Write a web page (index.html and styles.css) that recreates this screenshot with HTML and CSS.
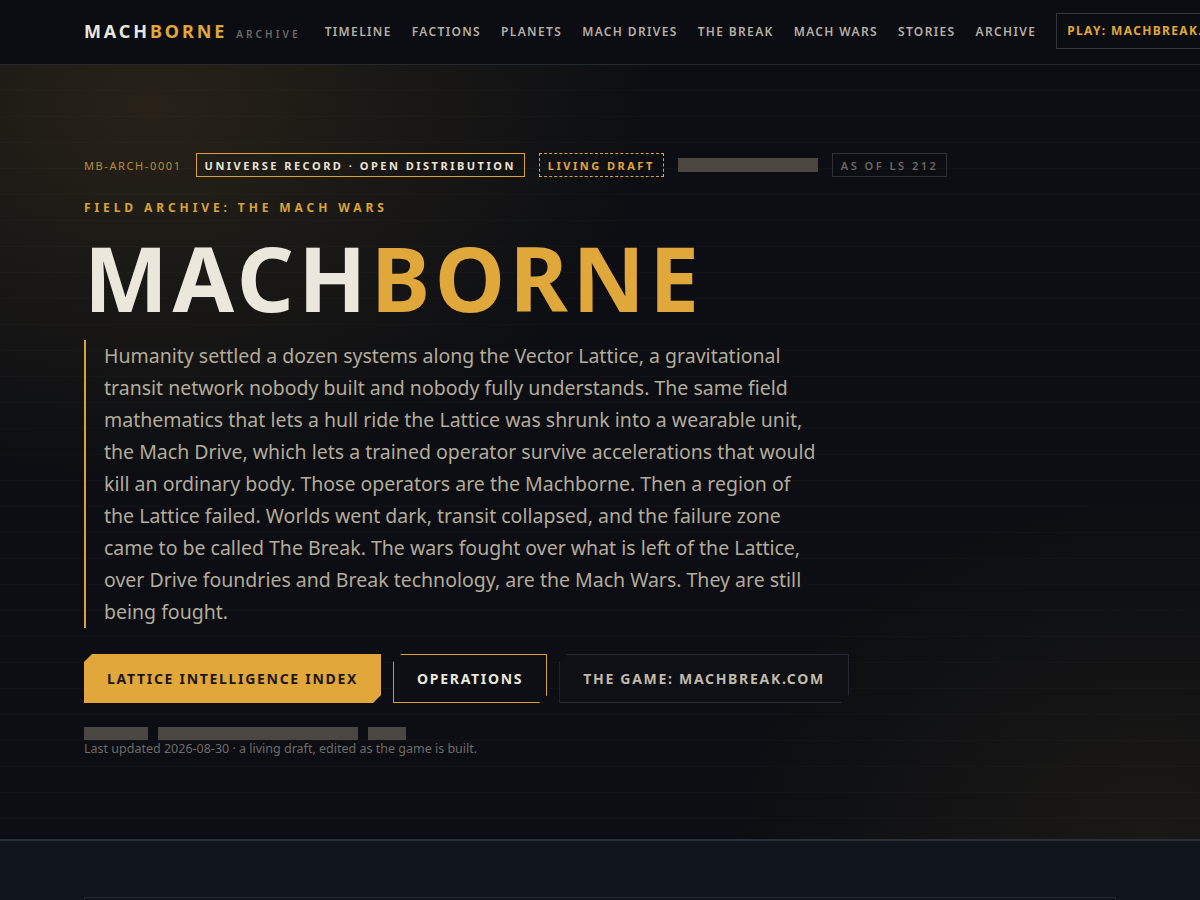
FILE: index.html
```html
<!DOCTYPE html>
<html lang="en">
<head>
<meta charset="utf-8">
<title>Machborne Archive</title>
<link rel="stylesheet" href="styles.css">
</head>
<body>
<header class="topbar">
  <div class="topbar-inner">
    <a class="brand" href="#"><span class="brand-a">MACH</span><span class="brand-b">BORNE</span><span class="brand-sub">ARCHIVE</span></a>
    <nav class="nav">
      <a href="#">TIMELINE</a>
      <a href="#">FACTIONS</a>
      <a href="#">PLANETS</a>
      <a href="#">MACH DRIVES</a>
      <a href="#">THE BREAK</a>
      <a href="#">MACH WARS</a>
      <a href="#">STORIES</a>
      <a href="#">ARCHIVE</a>
      <a class="play" href="#">PLAY: MACHBREAK.COM</a>
    </nav>
  </div>
</header>

<section class="hero">
  <div class="hero-inner">
    <div class="meta">
      <span class="code">MB-ARCH-0001</span>
      <span class="tag tag-solid">UNIVERSE RECORD · OPEN DISTRIBUTION</span>
      <span class="tag tag-dashed">LIVING DRAFT</span>
      <span class="redact redact-meta"></span>
      <span class="tag tag-muted">AS OF LS 212</span>
    </div>
    <p class="kicker">FIELD ARCHIVE: THE MACH WARS</p>
    <h1 class="title"><span class="t-a">MACH</span><span class="t-b">BORNE</span></h1>
    <p class="lede">Humanity settled a dozen systems along the Vector Lattice, a gravitational transit network nobody built and nobody fully understands. The same field mathematics that lets a hull ride the Lattice was shrunk into a wearable unit, the Mach Drive, which lets a trained operator survive accelerations that would kill an ordinary body. Those operators are the Machborne. Then a region of the Lattice failed. Worlds went dark, transit collapsed, and the failure zone came to be called The Break. The wars fought over what is left of the Lattice, over Drive foundries and Break technology, are the Mach Wars. They are still being fought.</p>
    <div class="actions">
      <a class="btn btn-primary" href="#">LATTICE INTELLIGENCE INDEX</a>
      <a class="btn btn-outline" href="#">OPERATIONS</a>
      <a class="btn btn-ghost" href="#">THE GAME: MACHBREAK.COM</a>
    </div>
    <div class="redacts">
      <span class="redact r1"></span>
      <span class="redact r2"></span>
      <span class="redact r3"></span>
    </div>
    <p class="updated">Last updated 2026-08-30 · a living draft, edited as the game is built.</p>
  </div>
</section>

<section class="next">
  <div class="next-inner">
    <div class="panel"></div>
  </div>
</section>
</body>
</html>
```

FILE: styles.css
```css
* { box-sizing: border-box; }
html, body { margin: 0; padding: 0; }
html { overflow-x: hidden; }
body {
  background: #0b0d12;
  color: #b8b1a2;
  font-family: "Noto Sans", "Open Sans", sans-serif;
  width: 1200px;
  overflow-x: hidden;
}
a { text-decoration: none; color: inherit; }

.topbar {
  height: 65px;
  background: #0b0d12;
  border-bottom: 1px solid #252a31;
}
.topbar-inner {
  height: 62px;
  display: flex;
  align-items: center;
  padding-left: 84px;
  white-space: nowrap;
}
.brand {
  display: flex;
  align-items: baseline;
  font-weight: 700;
  font-size: 18px;
  letter-spacing: 2.9px;
}
.brand-a { color: #ece7dc; }
.brand-b { color: #e0a73a; }
.brand-sub {
  margin-left: 9px;
  font-size: 10px;
  font-weight: 600;
  letter-spacing: 3.1px;
  color: #6d6a65;
}
.nav {
  display: flex;
  align-items: center;
  margin-left: 24px;
  gap: 20px;
}
.nav a {
  font-size: 12px;
  font-weight: 600;
  letter-spacing: 1.35px;
  color: #b6b0a5;
}
.nav a.play {
  border: 1px solid #34373b;
  padding: 8px 10px 9px 10px;
  color: #e0a73a;
  font-weight: 700;
}

.hero {
  position: relative;
  height: 776px;
  border-bottom: 2px solid #2a3039;
  background:
    repeating-linear-gradient(180deg, rgba(255,255,255,0) 0 25px, rgba(255,255,255,0.016) 25px 26px),
    radial-gradient(ellipse 720px 540px at 150px 40px, rgba(224,167,58,0.13), rgba(224,167,58,0) 70%),
    radial-gradient(ellipse 600px 500px at 1150px 780px, rgba(224,167,58,0.07), rgba(224,167,58,0) 70%),
    #0c0e13;
}
.hero-inner {
  padding: 88px 0 0 84px;
}
.meta {
  display: flex;
  align-items: center;
  gap: 14px;
  height: 24px;
}
.code {
  font-size: 11px;
  letter-spacing: 1.6px;
  color: #b88d3e;
}
.tag {
  display: inline-flex;
  align-items: center;
  height: 24px;
  padding: 0 8px;
  font-size: 11px;
  font-weight: 700;
  letter-spacing: 2.5px;
}
.tag-solid {
  border: 1px solid #d9a33a;
  color: #e9e3d6;
}
.tag-dashed {
  border: 1px dashed #d9a33a;
  color: #e0a73a;
}
.tag-muted {
  border: 1px solid #2f3337;
  color: #6a6660;
  font-weight: 600;
}
.redact {
  display: inline-block;
  background: #4b4740;
}
.redact-meta { width: 140px; height: 14px; }

.kicker {
  margin: 22px 0 0;
  font-size: 12px;
  font-weight: 700;
  letter-spacing: 3.9px;
  color: #d9a33a;
  line-height: 18px;
}
.title {
  margin: 16px 0 0;
  font-size: 89px;
  font-weight: 700;
  line-height: 90px;
  letter-spacing: 4.5px;
  white-space: nowrap;
}
.t-a { color: #ece7dc; }
.t-b { color: #e0a73a; }

.lede {
  margin: 17px 0 0;
  border-left: 2px solid #d9a33a;
  padding: 0 0 0 18px;
  width: 740px;
  font-size: 19.5px;
  line-height: 32px;
  color: #b3ab9b;
}

.actions {
  display: flex;
  gap: 12px;
  margin-top: 26px;
}
.btn {
  display: inline-flex;
  align-items: center;
  height: 49px;
  padding: 0 23px;
  font-size: 14px;
  font-weight: 700;
  letter-spacing: 1.7px;
  clip-path: polygon(8px 0, 100% 0, 100% calc(100% - 8px), calc(100% - 8px) 100%, 0 100%, 0 8px);
}
.btn-primary {
  background: #e1a73b;
  color: #1b1710;
}
.btn-outline {
  border: 1px solid #d9a33a;
  color: #ece7dc;
  background: #0d0f14;
}
.btn-ghost {
  border: 1px solid #272c35;
  color: #c2baa9;
  background: #0e1015;
}

.redacts {
  display: flex;
  gap: 10px;
  margin-top: 24px;
}
.redacts .redact { height: 13px; background: #4a4743; }
.r1 { width: 64px; }
.r2 { width: 200px; }
.r3 { width: 38px; }
.updated {
  margin: 1px 0 0;
  font-size: 12.5px;
  line-height: 16px;
  color: #6e6b66;
}

.next {
  background: #10141b;
  height: 200px;
}
.next-inner {
  padding: 56px 84px 0;
}
.panel {
  border: 1px solid #262b33;
  height: 200px;
}
```
